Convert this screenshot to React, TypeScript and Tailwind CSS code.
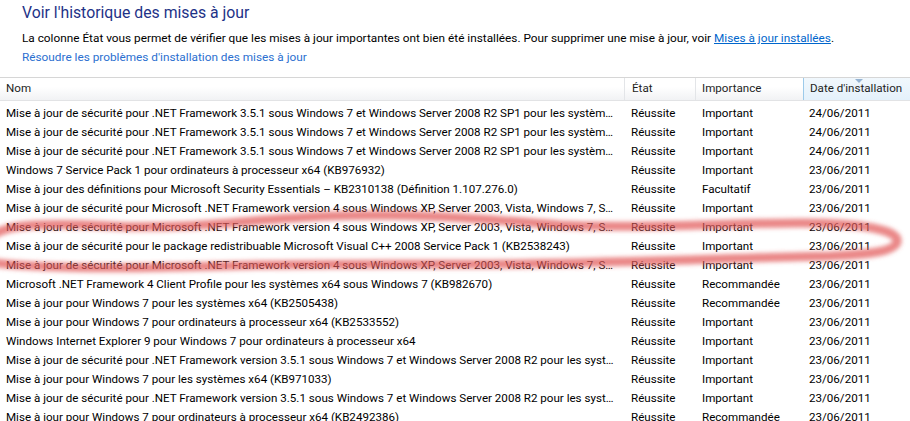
import React from 'react';

type Row = { nom: string; etat: string; importance: string; date: string };

const NET351 =
  'Mise à jour de sécurité pour .NET Framework 3.5.1 sous Windows 7 et Windows Server 2008 R2 SP1 pour les systèmes x64 (KB2518869)';
const NET4 =
  'Mise à jour de sécurité pour Microsoft .NET Framework version 4 sous Windows XP, Server 2003, Vista, Windows 7, Server 2008 x64 (KB2518870)';
const NETV351 =
  'Mise à jour de sécurité pour .NET Framework version 3.5.1 sous Windows 7 et Windows Server 2008 R2 pour les systèmes x64 (KB2478662)';

const rows: Row[] = [
  { nom: NET351, etat: 'Réussite', importance: 'Important', date: '24/06/2011' },
  { nom: NET351, etat: 'Réussite', importance: 'Important', date: '24/06/2011' },
  { nom: NET351, etat: 'Réussite', importance: 'Important', date: '24/06/2011' },
  { nom: 'Windows 7 Service Pack 1 pour ordinateurs à processeur x64 (KB976932)', etat: 'Réussite', importance: 'Important', date: '23/06/2011' },
  { nom: 'Mise à jour des définitions pour Microsoft Security Essentials – KB2310138 (Définition 1.107.276.0)', etat: 'Réussite', importance: 'Facultatif', date: '23/06/2011' },
  { nom: NET4, etat: 'Réussite', importance: 'Important', date: '23/06/2011' },
  { nom: NET4, etat: 'Réussite', importance: 'Important', date: '23/06/2011' },
  { nom: 'Mise à jour de sécurité pour le package redistribuable Microsoft Visual C++ 2008 Service Pack 1 (KB2538243)', etat: 'Réussite', importance: 'Important', date: '23/06/2011' },
  { nom: NET4, etat: 'Réussite', importance: 'Important', date: '23/06/2011' },
  { nom: 'Microsoft .NET Framework 4 Client Profile pour les systèmes x64 sous Windows 7 (KB982670)', etat: 'Réussite', importance: 'Recommandée', date: '23/06/2011' },
  { nom: 'Mise à jour pour Windows 7 pour les systèmes x64 (KB2505438)', etat: 'Réussite', importance: 'Recommandée', date: '23/06/2011' },
  { nom: 'Mise à jour pour Windows 7 pour ordinateurs à processeur x64 (KB2533552)', etat: 'Réussite', importance: 'Important', date: '23/06/2011' },
  { nom: 'Windows Internet Explorer 9 pour Windows 7 pour ordinateurs à processeur x64', etat: 'Réussite', importance: 'Important', date: '23/06/2011' },
  { nom: NETV351, etat: 'Réussite', importance: 'Important', date: '23/06/2011' },
  { nom: 'Mise à jour pour Windows 7 pour les systèmes x64 (KB971033)', etat: 'Réussite', importance: 'Important', date: '23/06/2011' },
  { nom: NETV351, etat: 'Réussite', importance: 'Important', date: '23/06/2011' },
  { nom: 'Mise à jour pour Windows 7 pour ordinateurs à processeur x64 (KB2492386)', etat: 'Réussite', importance: 'Recommandée', date: '23/06/2011' },
];

const cols = 'grid grid-cols-[624px_71px_108px_1fr]';

const App: React.FC = () => {
  return (
    <div className="relative h-[421px] w-[910px] overflow-hidden bg-white text-[11.6px] text-black [font-family:Roboto,'Liberation_Sans',sans-serif]">
      <div className="px-[22px] pt-[2px]">
        <h1 className="text-[15.8px] leading-[22px] text-[#1e3287]">Voir l'historique des mises à jour</h1>
        <p className="mt-[6px] text-[11.8px] leading-[16px]">
          La colonne État vous permet de vérifier que les mises à jour importantes ont bien été installées. Pour supprimer une mise à jour, voir{' '}
          <span className="text-[#0066cc] underline">Mises à jour installées</span>.
        </p>
        <p className="mt-[3px] text-[11.8px] leading-[16px] text-[#2b6fd0]">Résoudre les problèmes d'installation des mises à jour</p>
      </div>

      <div className="mt-[12px]">
        <div className={`${cols} h-[24px] border-y border-t-[#d6d6d6] border-b-[#e2e3e5] bg-gradient-to-b from-white from-40% to-[#f1f2f4] text-[#1e1e1e]`}>
          <div className="flex items-center pl-[6px]">Nom</div>
          <div className="flex items-center border-l border-[#e3e5e8] pl-[7px]">État</div>
          <div className="flex items-center border-l border-[#e3e5e8] pl-[6px]">Importance</div>
          <div className="relative flex items-center border-l border-[#9ccaea] bg-gradient-to-b from-[#f1f8fd] to-[#e4f1fb] pl-[6px]">
            <svg className="absolute left-[51px] top-[1px]" width="8" height="4" viewBox="0 0 8 4">
              <path d="M0 0 H8 L4 4 Z" fill="#95b3d2" />
            </svg>
            Date d'installation
          </div>
        </div>

        <div className="pt-[3px]">
          {rows.map((r, i) => (
            <div key={i} className={`${cols} h-[19px] items-center`}>
              <div className="truncate pl-[6px] pr-[8px]">{r.nom}</div>
              <div className="pl-[7px]">{r.etat}</div>
              <div className="pl-[7px]">{r.importance}</div>
              <div className="pl-[6px]">{r.date}</div>
            </div>
          ))}
        </div>
      </div>

      <svg className="pointer-events-none absolute inset-0" width="910" height="421" viewBox="0 0 910 421">
        <defs>
          <filter id="soft" x="-5%" y="-20%" width="110%" height="140%">
            <feGaussianBlur stdDeviation="2" />
          </filter>
        </defs>
        <path
          d="M -12 250 C -16 224, 30 222, 110 226 C 190 230, 250 219, 330 216 C 420 213, 480 219, 560 225 C 640 229, 720 223, 800 223 C 862 223, 900 230, 897 242 C 894 252, 870 254, 830 256 C 740 258, 640 262, 520 264 C 420 265, 330 263, 220 266 C 120 269, 30 268, -12 262"
          fill="none"
          stroke="#e25a5a"
          strokeOpacity="0.72"
          strokeWidth="9"
          strokeLinecap="round"
          filter="url(#soft)"
        />
      </svg>
    </div>
  );
};

export default App;
